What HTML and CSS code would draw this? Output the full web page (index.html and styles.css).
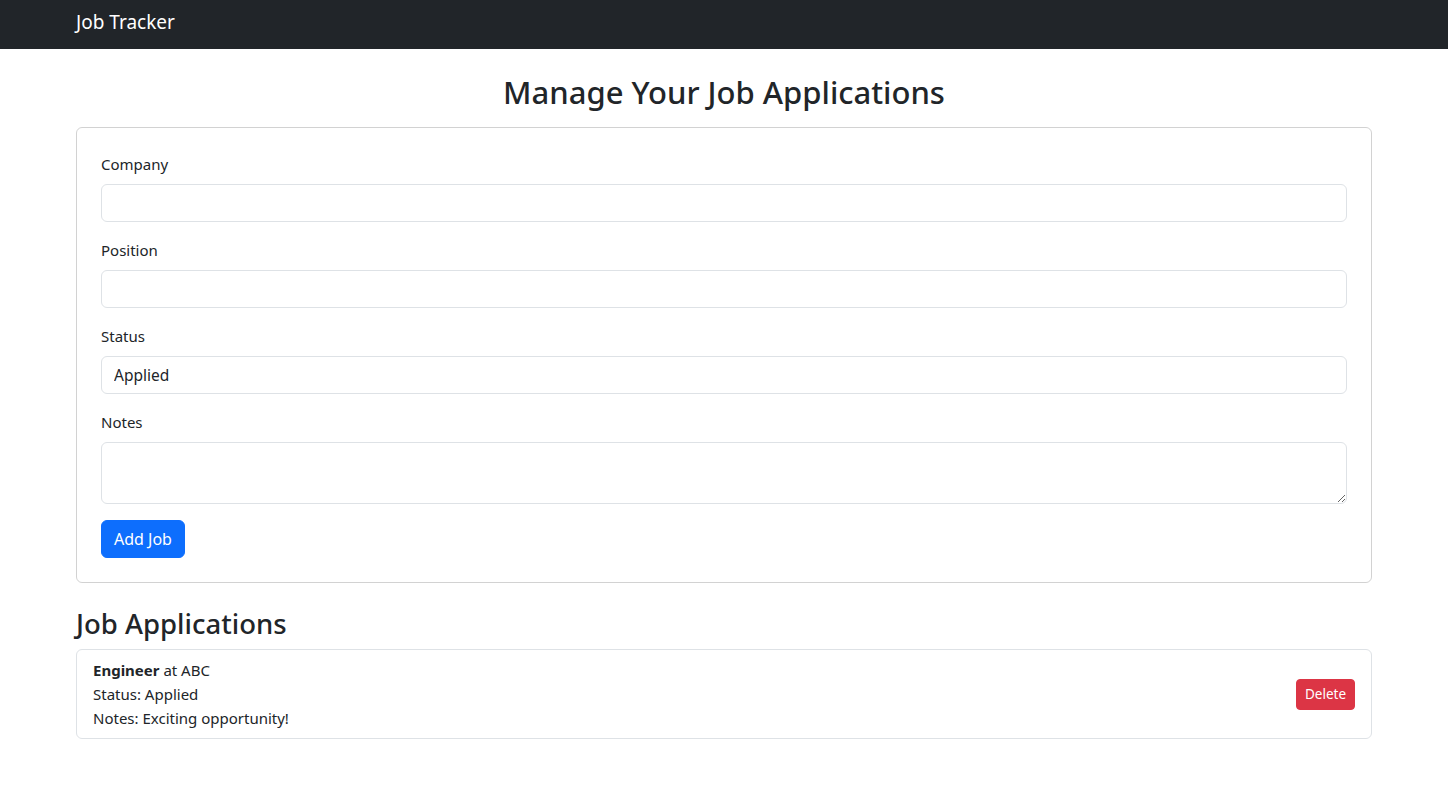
FILE: index.html
```html
<!DOCTYPE html>
<html lang="en">
<head>
<meta charset="utf-8">
<title>Job Tracker</title>
<link rel="stylesheet" href="styles.css">
</head>
<body>
<nav class="navbar">
  <div class="container">
    <span class="brand">Job Tracker</span>
  </div>
</nav>
<main class="container">
  <h2 class="page-title">Manage Your Job Applications</h2>
  <form class="card">
    <div class="field">
      <label class="label" for="company">Company</label>
      <input class="control" id="company" type="text">
    </div>
    <div class="field">
      <label class="label" for="position">Position</label>
      <input class="control" id="position" type="text">
    </div>
    <div class="field">
      <label class="label" for="status">Status</label>
      <input class="control" id="status" type="text" value="Applied">
    </div>
    <div class="field">
      <label class="label" for="notes">Notes</label>
      <textarea class="control area" id="notes" rows="2"></textarea>
    </div>
    <button type="button" class="btn btn-primary">Add Job</button>
  </form>
  <h3 class="section-title">Job Applications</h3>
  <ul class="list">
    <li class="item">
      <div class="item-text">
        <div><strong>Engineer</strong> at ABC</div>
        <div>Status: Applied</div>
        <div>Notes: Exciting opportunity!</div>
      </div>
      <button type="button" class="btn btn-danger btn-sm">Delete</button>
    </li>
  </ul>
</main>
</body>
</html>
```
FILE: styles.css
```css
* { box-sizing: border-box; }
html, body { margin: 0; padding: 0; }
body {
  font-family: "Noto Sans", "Liberation Sans", sans-serif;
  font-size: 15px;
  line-height: 24px;
  color: #212529;
  background: #fff;
}
.container {
  width: 1320px;
  margin: 0 auto;
  padding: 0 12px;
}
.navbar {
  background: #212529;
  height: 49px;
  display: flex;
  align-items: center;
}
.brand {
  color: #fff;
  font-size: 19px;
  line-height: 30px;
  display: block;
  margin-top: -5px;
}
.page-title {
  margin: 24px 0 16px;
  font-size: 31px;
  font-weight: 500;
  line-height: 38px;
  text-align: center;
}
.card {
  border: 1px solid rgba(0,0,0,.175);
  border-radius: 6px;
  padding: 24px;
  margin: 0;
}
.field { margin-bottom: 16px; }
.label {
  display: block;
  margin-bottom: 8px;
}
.control {
  display: block;
  width: 100%;
  height: 38px;
  padding: 6px 12px;
  font: inherit;
  font-size: 15.5px;
  line-height: 24px;
  color: #212529;
  background: #fff;
  border: 1px solid #dee2e6;
  border-radius: 6px;
  outline: none;
}
.area {
  height: 62px;
  resize: vertical;
}
.btn {
  display: inline-block;
  font-family: inherit;
  border: 1px solid transparent;
  cursor: pointer;
  color: #fff;
}
.btn-primary {
  background: #0d6efd;
  border-color: #0d6efd;
  padding: 6px 12px;
  border-radius: 6px;
  font-size: 16px;
  line-height: 24px;
}
.btn-danger {
  background: #dc3545;
  border-color: #dc3545;
}
.btn-sm {
  padding: 4px 8px;
  font-size: 13.5px;
  line-height: 21px;
  border-radius: 4px;
}
.section-title {
  margin: 24px 0 8px;
  font-size: 27.5px;
  font-weight: 500;
  line-height: 34px;
}
.list {
  list-style: none;
  margin: 0;
  padding: 0;
}
.item {
  display: flex;
  justify-content: space-between;
  align-items: center;
  padding: 8px 16px;
  border: 1px solid #dee2e6;
  border-radius: 6px;
}
.item strong { font-weight: 700; }
```
